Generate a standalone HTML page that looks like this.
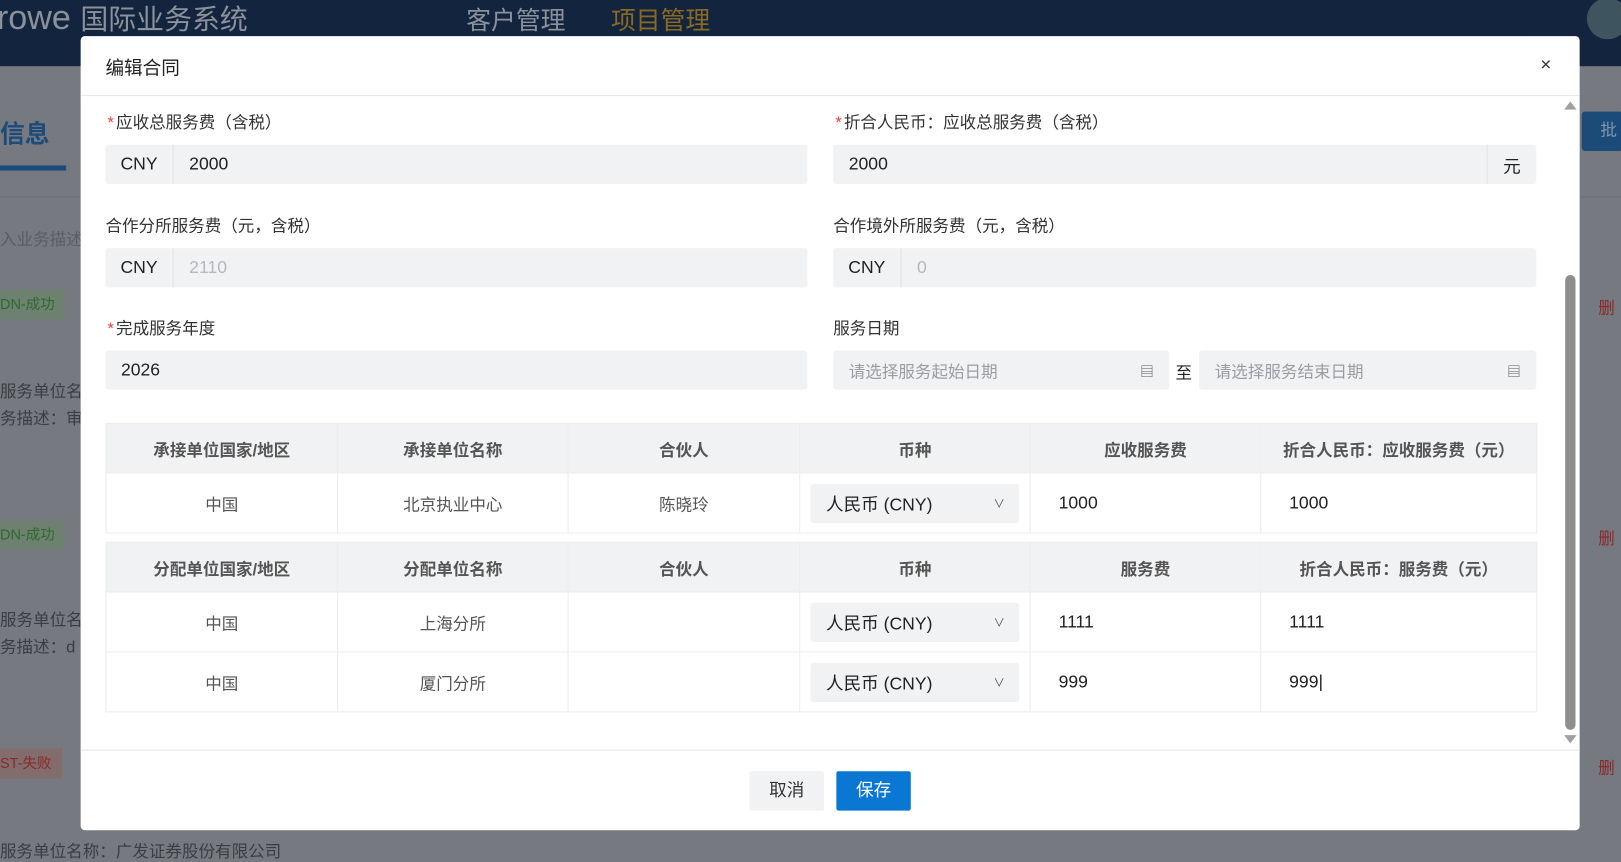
<!DOCTYPE html>
<html><head><meta charset="utf-8"><style>
*{box-sizing:border-box;margin:0;padding:0}
html,body{width:1621px;height:854px;overflow:hidden;background:#76797f}
body{font-family:"Liberation Sans","Noto Sans CJK SC",sans-serif}
#w{position:absolute;left:0;top:0;width:1568px;height:826px;transform:scale(1.03381,1.03390);transform-origin:0 0;background:#76797f}
.a{position:absolute}
.hd{left:0;top:0;width:1568px;height:64px;background:#13243f}
.bgline{left:0;width:1568px;height:1px;background:#6c6f75}
.lbl{position:absolute;font-size:16px;color:#333}
.lbl .s{color:#f04040;margin-right:2px}
.inp{position:absolute;height:38px;background:#f1f2f4;border-radius:3px;font-size:17px;color:#222;display:flex;align-items:center}
.pre{width:66px;height:100%;display:flex;align-items:center;justify-content:center;border-right:1px solid #e2e3e6}
.ph{color:#b5b8be}
table{position:absolute;border-collapse:collapse;left:102px;width:1384px;table-layout:fixed}
td,th{border:1px solid #ebedf0;text-align:center;font-size:16px;color:#555;font-weight:normal}
th{background:#f1f2f4;font-weight:bold;color:#555;height:48px}
td{height:58px;background:#fff}
td.l{text-align:left;padding-left:27px;color:#222;font-size:17px}
.sel{margin:0 10px;height:38px;background:#f1f2f4;border-radius:3px;display:flex;align-items:center;justify-content:space-between;padding:0 14px 0 15px;color:#222;font-size:17px}
</style></head><body><div id="w">
<div class="a hd"></div>
<div class="a" style="left:-3px;top:-3px;font-size:33px;color:#8b919b;line-height:40px">rowe <span style="font-size:27px">国际业务系统</span></div>
<div class="a" style="left:451px;top:0px;font-size:24px;color:#8b919b">客户管理</div>
<div class="a" style="left:591px;top:0px;font-size:24px;color:#8a6a20">项目管理</div>
<div class="a" style="left:1535px;top:-2px;width:40px;height:40px;border-radius:50%;background:#3e5560"></div>
<div class="a bgline" style="top:190px"></div>
<div class="a" style="left:0;top:110px;font-size:24px;font-weight:bold;color:#1c4b7a">信息</div>
<div class="a" style="left:0;top:160px;width:64px;height:5px;background:#1c4b7a"></div>
<div class="a" style="left:0;top:218px;font-size:16px;color:#5a5d63">入业务描述</div>
<div class="a" style="left:0;top:280px;width:62px;height:29px;background:#6e8070;color:#2c6b2c;font-size:14px;line-height:29px">DN-成功</div>
<div class="a" style="left:0;top:367px;font-size:16px;color:#3a3d42;line-height:26px">服务单位名<br>务描述：审</div>
<div class="a" style="left:0;top:503px;width:62px;height:29px;background:#6e8070;color:#2c6b2c;font-size:14px;line-height:29px">DN-成功</div>
<div class="a" style="left:0;top:588px;font-size:16px;color:#3a3d42;line-height:26px">服务单位名<br>务描述：d</div>
<div class="a" style="left:0;top:724px;width:60px;height:29px;background:#826c6c;color:#8a2a2a;font-size:14px;line-height:29px">ST-失败</div>
<div class="a" style="left:0;top:810px;font-size:16px;color:#3a3d42">服务单位名称：广发证券股份有限公司</div>
<div class="a" style="left:1530px;top:108px;width:40px;height:38px;background:#1c4b7a;border-radius:3px;color:#7f96b0;font-size:16px;line-height:38px;padding-left:18px">批</div>
<div class="a" style="left:1546px;top:284px;color:#8a2a2a;font-size:16px">删</div>
<div class="a" style="left:1546px;top:507px;color:#8a2a2a;font-size:16px">删</div>
<div class="a" style="left:1546px;top:729px;color:#8a2a2a;font-size:16px">删</div>

<div class="a" style="left:78px;top:35px;width:1450px;height:768px;background:#fff;border-radius:4px"></div>
<div class="a" style="left:102px;top:52px;font-size:18px;color:#222">编辑合同</div>
<div class="a" style="left:1490px;top:52px;font-size:18px;color:#333">×</div>
<div class="a" style="left:78px;top:92px;width:1450px;height:1px;background:#e6e7ea"></div>

<div class="lbl" style="left:104px;top:105px"><span class="s">*</span>应收总服务费（含税）</div>
<div class="inp" style="left:102px;top:140px;width:679px"><div class="pre">CNY</div><span style="margin-left:15px">2000</span></div>
<div class="lbl" style="left:808px;top:105px"><span class="s">*</span>折合人民币：应收总服务费（含税）</div>
<div class="inp" style="left:806px;top:140px;width:680px"><span style="margin-left:15px;flex:1">2000</span><div class="pre" style="width:48px;border-right:0;border-left:1px solid #e2e3e6">元</div></div>

<div class="lbl" style="left:102px;top:205px">合作分所服务费（元，含税）</div>
<div class="inp" style="left:102px;top:240px;width:679px"><div class="pre">CNY</div><span class="ph" style="margin-left:15px">2110</span></div>
<div class="lbl" style="left:806px;top:205px">合作境外所服务费（元，含税）</div>
<div class="inp" style="left:806px;top:240px;width:680px"><div class="pre">CNY</div><span class="ph" style="margin-left:15px">0</span></div>

<div class="lbl" style="left:104px;top:304px"><span class="s">*</span>完成服务年度</div>
<div class="inp" style="left:102px;top:339px;width:679px"><span style="margin-left:15px">2026</span></div>
<div class="lbl" style="left:806px;top:304px">服务日期</div>
<div class="inp" style="left:806px;top:339px;width:325px;justify-content:space-between;padding:0 15px"><span class="ph" style="color:#9a9da3;font-size:16px">请选择服务起始日期</span><span style="font-size:13px;color:#555">&#x25A4;</span></div>
<div class="a" style="left:1137px;top:347px;font-size:16px;color:#222">至</div>
<div class="inp" style="left:1160px;top:339px;width:326px;justify-content:space-between;padding:0 15px"><span class="ph" style="color:#9a9da3;font-size:16px">请选择服务结束日期</span><span style="font-size:13px;color:#555">&#x25A4;</span></div>

<table style="top:409px"><colgroup><col style="width:224px"><col style="width:223px"><col style="width:224px"><col style="width:223px"><col style="width:223px"><col style="width:267px"></colgroup>
<tr><th>承接单位国家/地区</th><th>承接单位名称</th><th>合伙人</th><th>币种</th><th>应收服务费</th><th>折合人民币：应收服务费（元）</th></tr>
<tr><td>中国</td><td>北京执业中心</td><td>陈晓玲</td><td><div class="sel">人民币 (CNY)<span style="font-size:11px;color:#555">&#x2228;</span></div></td><td class="l">1000</td><td class="l">1000</td></tr>
</table>
<table style="top:524px"><colgroup><col style="width:224px"><col style="width:223px"><col style="width:224px"><col style="width:223px"><col style="width:223px"><col style="width:267px"></colgroup>
<tr><th>分配单位国家/地区</th><th>分配单位名称</th><th>合伙人</th><th>币种</th><th>服务费</th><th>折合人民币：服务费（元）</th></tr>
<tr><td>中国</td><td>上海分所</td><td></td><td><div class="sel">人民币 (CNY)<span style="font-size:11px;color:#555">&#x2228;</span></div></td><td class="l">1111</td><td class="l">1111</td></tr>
<tr><td>中国</td><td>厦门分所</td><td></td><td><div class="sel">人民币 (CNY)<span style="font-size:11px;color:#555">&#x2228;</span></div></td><td class="l">999</td><td class="l">999|</td></tr>
</table>

<div class="a" style="left:1513px;top:98px;width:0;height:0;border-left:6px solid transparent;border-right:6px solid transparent;border-bottom:8px solid #a0a0a0"></div>
<div class="a" style="left:1514px;top:266px;width:10px;height:440px;background:#8e8e8e;border-radius:5px"></div>
<div class="a" style="left:1513px;top:711px;width:0;height:0;border-left:6px solid transparent;border-right:6px solid transparent;border-top:8px solid #a0a0a0"></div>

<div class="a" style="left:78px;top:725px;width:1450px;height:1px;background:#e6e7ea"></div>
<div class="a" style="left:725px;top:746px;width:72px;height:38px;background:#f1f2f4;border-radius:2px;font-size:17px;color:#333;text-align:center;line-height:38px">取消</div>
<div class="a" style="left:809px;top:746px;width:72px;height:38px;background:#0a78d2;border-radius:2px;font-size:17px;color:#fff;text-align:center;line-height:38px">保存</div>
</div></body></html>
